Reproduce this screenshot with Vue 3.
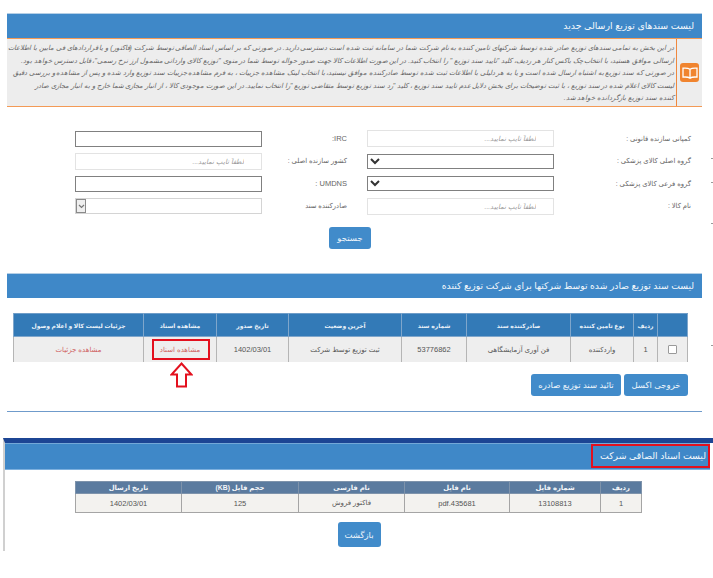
<script setup>
const notice = [
  'در این بخش به تمامی سندهای توزیع صادر شده توسط شرکتهای تامین کننده به نام شرکت شما در سامانه ثبت شده است دسترسی دارید. در صورتی که بر اساس اسناد الصاقی توسط شرکت (فاکتور) و یا قراردادهای فی مابین با اطلاعات',
  'ارسالی موافق هستید، با انتخاب چک باکس کنار هر ردیف، کلید "تایید سند توزیع " را انتخاب کنید. در این صورت اطلاعات کالا جهت صدور حواله توسط شما در منوی "توزیع کالای وارداتی مشمول ارز نرخ رسمی"، قابل دسترس خواهد بود.',
  'در صورتی که سند توزیع به اشتباه ارسال شده است و یا به هر دلیلی با اطلاعات ثبت شده توسط صادرکننده موافق نیستید، با انتخاب لینک مشاهده جزییات ، به فرم مشاهده جزییات سند توزیع وارد شده و پس از مشاهده و بررسی دقیق',
  'لیست کالای اعلام شده در سند توزیع ، با ثبت توضیحات برای بخش دلایل عدم تایید سند توزیع ، کلید "رد سند توزیع توسط متقاضی توزیع "را انتخاب نمایید. در این صورت موجودی کالا ، از انبار مجازی شما خارج و به انبار مجازی صادر',
  'کننده سند توزیع بازگردانده خواهد شد.',
]
const ph = 'لطفاً تایپ نمایید...'
const ticks = [158, 182, 223, 345]
</script>

<template>
  <div class="page" dir="rtl">
    <span v-for="t in ticks" :key="t" class="tick" :style="{ top: t + 'px' }"></span>
    <section class="sec first">
      <h2 class="bar">لیست سندهای توزیع ارسالی جدید</h2>
      <div class="notice">
        <div class="notice-icon">
          <span class="book">
            <svg width="16" height="12" viewBox="0 0 16 12" fill="none" stroke="#fff" stroke-width="1.3">
              <path d="M8 2.2C6.500 1.200 3.600 1 1 1.200v8.900c2.600-.2 5.500 0 7 1 1.500-1 4.400-1.200 7-1V1.200C12.400 1 9.500 1.200 8 2.200zM8 2.200v8.900" />
            </svg>
          </span>
        </div>
        <div class="notice-text">
          <div v-for="(line, i) in notice" :key="i" class="nline">{{ line }}</div>
        </div>
      </div>
    </section>

    <form class="filters" @submit.prevent>
      <div class="frow">
        <label class="lab lab-r">کمپانی سازنده قانونی :</label>
        <input class="inp soft" :placeholder="ph" />
        <label class="lab lab-l latin">IRC:</label>
        <input class="inp hard" />
      </div>
      <div class="frow">
        <label class="lab lab-r">گروه اصلی کالای پزشکی :</label>
        <select class="inp sel"></select>
        <label class="lab lab-l">کشور سازنده اصلی :</label>
        <input class="inp soft" :placeholder="ph" />
      </div>
      <div class="frow">
        <label class="lab lab-r">گروه فرعی کالای پزشکی :</label>
        <select class="inp sel"></select>
        <label class="lab lab-l latin">UMDNS :</label>
        <input class="inp hard" />
      </div>
      <div class="frow">
        <label class="lab lab-r">نام کالا :</label>
        <input class="inp soft" :placeholder="ph" />
        <label class="lab lab-l">صادرکننده سند</label>
        <div class="inp fake-sel">
          <span class="fake-arrow">
            <svg width="7" height="5" viewBox="0 0 7 5" fill="none" stroke="#777" stroke-width="1.200"><path d="M1 1l2.500 2.500L6 1" /></svg>
          </span>
        </div>
      </div>
      <div class="search-wrap"><button class="btn search">جستجو</button></div>
    </form>

    <section class="sec second">
      <h2 class="bar">لیست سند توزیع صادر شده توسط شرکتها برای شرکت توزیع کننده</h2>
      <table class="grid blue">
        <colgroup>
          <col style="width:30px" /><col style="width:24px" /><col style="width:63px" /><col style="width:104px" />
          <col style="width:65px" /><col style="width:113px" /><col style="width:72px" /><col style="width:73px" /><col />
        </colgroup>
        <thead>
          <tr>
            <th></th><th>ردیف</th><th>نوع تامین کننده</th><th>صادرکننده سند</th><th>شماره سند</th>
            <th>آخرین وضعیت</th><th>تاریخ صدور</th><th>مشاهده اسناد</th><th>جزئیات لیست کالا و اعلام وصول</th>
          </tr>
        </thead>
        <tbody>
          <tr>
            <td><span class="check"></span></td><td class="num">1</td><td>واردکننده</td><td>فن آوری آزمایشگاهی</td><td class="num">53776862</td>
            <td>ثبت توزیع توسط شرکت</td><td class="num">1402/03/01</td>
            <td class="marked"><a class="link">مشاهده اسناد</a><span class="redbox"></span>
              <svg class="arrow" width="23" height="26" viewBox="0 0 23 26" fill="#fff" stroke="#e3101e" stroke-width="2"><path d="M11.500 1.500L21.500 12.500H16V24.500H7V12.500H1.500Z" /></svg>
            </td>
            <td><a class="link">مشاهده جزئیات</a></td>
          </tr>
        </tbody>
      </table>
      <div class="actions">
        <button class="btn">خروجی اکسل</button>
        <button class="btn">تائید سند توزیع صادره</button>
      </div>
      <hr class="rule" />
    </section>

    <section class="third">
      <h2 class="bar bar3"><span class="title-box">لیست اسناد الصاقی شرکت</span></h2>
      <table class="grid slate">
        <colgroup>
          <col style="width:41px" /><col style="width:91px" /><col style="width:105px" />
          <col style="width:106px" /><col style="width:117px" /><col />
        </colgroup>
        <thead>
          <tr><th>ردیف</th><th>شماره فایل</th><th>نام فایل</th><th>نام فارسی</th><th>حجم فایل (KB)</th><th>تاریخ ارسال</th></tr>
        </thead>
        <tbody>
          <tr><td class="num">1</td><td class="num">13108813</td><td class="file num">pdf.435681</td><td>فاکتور فروش</td><td class="num">125</td><td class="num">1402/03/01</td></tr>
        </tbody>
      </table>
      <div class="back-wrap"><button class="btn back">بازگشت</button></div>
    </section>
  </div>
</template>

<style>
html, body { margin: 0; background: #fff; }
</style>

<style scoped>
.page {
  position: relative;
  width: 713px;
  height: 578px;
  overflow: hidden;
  padding-top: 13px;
  box-sizing: border-box;
  background: #fff;
  font-family: "Liberation Sans", "DejaVu Sans", sans-serif;
  color: #555;
  font-size: 8px;
}
.tick {
  position: absolute;
  right: 0;
  width: 2px;
  height: 1px;
  background: #999;
}
.sec { margin: 0 11px 0 7px; }
.bar {
  margin: 0;
  height: 25px;
  box-sizing: border-box;
  padding: 0 8px;
  background: #3f88c8;
  border-top: 1px solid #b5cfe6;
  color: #f4f8fc;
  font-size: 9.200px;
  font-weight: 400;
  line-height: 24px;
  white-space: nowrap;
}
.first .bar { font-size: 9.400px; }
.notice {
  display: flex;
  height: 69px;
  box-sizing: border-box;
  background: #ededed;
  border-top: 1px solid #f39a56;
  border-bottom: 1px solid #f39a56;
}
.notice-icon {
  width: 25px;
  flex: none;
  border-left: 1px solid #f0883e;
  display: flex;
  align-items: center;
  justify-content: center;
}
.book {
  width: 19px;
  height: 19px;
  background: #f0842f;
  border-radius: 3px;
  display: flex;
  align-items: center;
  justify-content: center;
}
.notice-text {
  flex: 1;
  padding: 3px 2px 0 0;
  font-style: italic;
  font-size: 6.800px;
  line-height: 12.500px;
  color: #666;
  overflow: hidden;
}
.nline { white-space: nowrap; }

.filters {
  margin-top: 23px;
  display: flex;
  flex-direction: column;
}
.frow {
  display: flex;
  align-items: center;
  height: 17px;
  margin-bottom: 5.500px;
  padding-right: 22px;
}
.lab {
  flex: none;
  font-size: 6.800px;
  color: #666;
  white-space: nowrap;
}
.latin { font-size: 7.500px; }
.lab-r { width: 137px; }
.lab-l { width: 85px; margin-right: 20px; }
.inp {
  flex: none;
  width: 187px;
  height: 17px;
  box-sizing: border-box;
  margin: 0;
  padding: 0 17px 0 8px;
  background: #fff;
  font: italic 6.800px "Liberation Sans", "DejaVu Sans", sans-serif;
  outline: none;
  border-radius: 0;
}
.inp::placeholder { color: #999; }
.soft { border: 1px solid #e3e3e3; }
.hard { height: 16px; border: 1px solid #808080; }
.sel { height: 15px; padding: 0; border: 1px solid #808080; color: #333; }
.fake-sel {
  height: 16px;
  padding: 0;
  border: 1px solid #d4d4d4;
  display: flex;
  justify-content: flex-end;
}
.fake-arrow {
  width: 10px;
  height: 14px;
  box-sizing: border-box;
  border: 1px solid #8a8a8a;
  background: #efefef;
  display: flex;
  align-items: center;
  justify-content: center;
}
.search-wrap {
  display: flex;
  justify-content: center;
  margin-top: 7px;
  padding-right: 13px;
}
.btn {
  border: 0;
  margin: 0;
  padding: 0;
  height: 22px;
  border-radius: 3px;
  background: #418bca;
  color: #eef5fb;
  font: 400 8.500px "Liberation Sans", "DejaVu Sans", sans-serif;
}
.search { width: 42px; }

.second { margin-top: 24px; }
.grid {
  border-collapse: collapse;
  table-layout: fixed;
  text-align: center;
}
.blue { width: 675px; margin: 15px 14px 0 0; }
.blue th {
  height: 22px;
  padding: 0;
  background: #337ab7;
  color: #eaf2f9;
  font-size: 6px;
  font-weight: 700;
  border: 1px solid #7fa6cb;
  border-top: 1px solid #6f9dc8;
  white-space: nowrap;
}
.blue td {
  height: 25px;
  padding: 0;
  background: #eee;
  color: #555;
  font-size: 7px;
  border-right: 1px solid #b5b5b5;
  border-left: 1px solid #b5b5b5;
  white-space: nowrap;
}
.blue td.num, .slate td.num { font-size: 7.500px; }
.check {
  display: inline-block;
  width: 7px;
  height: 7px;
  background: #fff;
  border: 1px solid #9a9a9a;
  border-radius: 1px;
  vertical-align: middle;
}
.link { color: #cf5f5f; }
.marked { position: relative; }
.redbox {
  position: absolute;
  left: 8px;
  top: 2px;
  width: 58px;
  height: 21px;
  box-sizing: border-box;
  border: 2px solid #e3101e;
}
.arrow {
  position: absolute;
  left: 26px;
  top: 25px;
}
.actions {
  display: flex;
  gap: 3px;
  margin: 12px 14px 0 0;
}
.actions .btn:first-child { width: 64px; }
.actions .btn:last-child { width: 90px; }
.rule {
  margin: 15px 0 0;
  border: 0;
  border-top: 1px solid #6f9bcb;
}

.third {
  margin: 26px 0 0 0;
  height: 113px;
  width: 710px;
  box-sizing: border-box;
  border-top: 5px solid #1c4594;
  border-left: 2px solid #d0d0d0;
}
.bar3 {
  height: 27px;
  padding: 0;
  margin-right: 3px;
  border-top: 1px solid #73a8d8;
  border-bottom: 1px solid #7db0de;
  line-height: 20px;
}
.title-box {
  display: inline-block;
  width: 119px;
  height: 24px;
  box-sizing: border-box;
  padding-right: 2px;
  border: 2px solid #e3101e;
  font-size: 9.300px;
}
.slate { width: 567px; margin: 11px 71px 0 0; }
.slate th {
  height: 11px;
  padding: 0;
  background: #5b7b9f;
  color: #f3f6f9;
  font-size: 6.800px;
  font-weight: 700;
  border: 1px solid #7e93ab;
  white-space: nowrap;
}
.slate td {
  height: 18px;
  padding: 0;
  background: #f3f2ef;
  color: #555;
  font-size: 7px;
  border: 1px solid #a5a5a5;
  border-top: 0;
  white-space: nowrap;
}
.file { color: #4f86c0; }
.back-wrap {
  display: flex;
  justify-content: center;
  margin-top: 9px;
}
.back { width: 43px; height: 25px; }
</style>
